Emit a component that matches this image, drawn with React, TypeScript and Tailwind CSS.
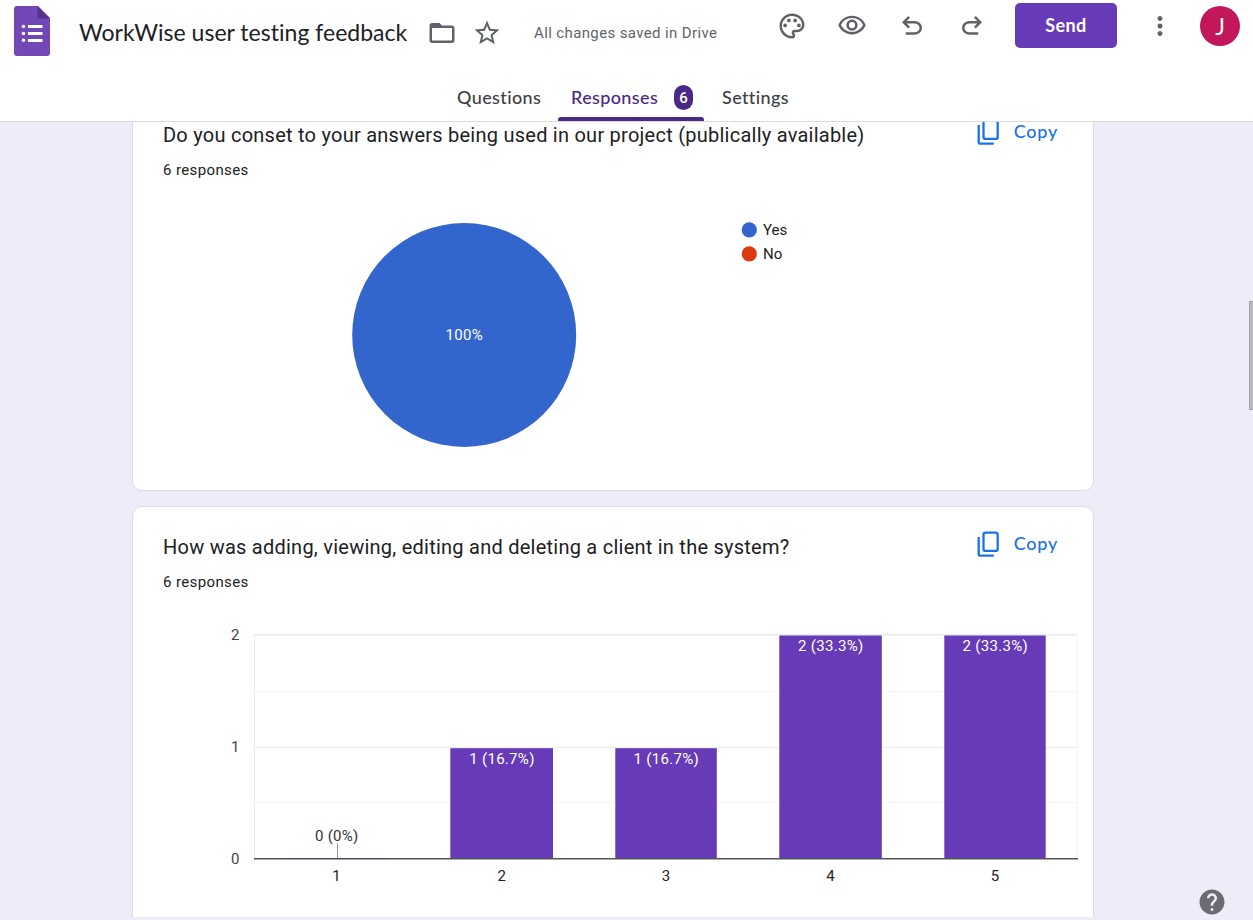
import React from "react";
import { MdOutlinePalette, MdOutlineRemoveRedEye, MdFolderOpen, MdStarBorder, MdMoreVert, MdHelp } from "react-icons/md";

const UNDO =
  "M280-200v-80h284q63 0 109.5-40T720-420q0-60-46.5-100T564-560H312l104 104-56 56-200-200 200-200 56 56-104 104h252q97 0 169.5 63T800-420q0 94-72.5 157T564-200H280Z";

const bars = [
  { x: 285.5, width: 102, label: "1", text: "0 (0%)", value: 0 },
  { x: 450.3, width: 102.7, label: "2", text: "1 (16.7%)", value: 1 },
  { x: 615.3, width: 101.5, label: "3", text: "1 (16.7%)", value: 1 },
  { x: 779.3, width: 102.5, label: "4", text: "2 (33.3%)", value: 2 },
  { x: 944.3, width: 101.4, label: "5", text: "2 (33.3%)", value: 2 },
];

function Logo() {
  return (
    <svg width="36" height="50" viewBox="0 0 36 50" className="ml-[14px] mt-[6px] shrink-0">
      <path d="M3 0H24L36 12V47a3 3 0 0 1-3 3H3a3 3 0 0 1-3-3V3a3 3 0 0 1 3-3Z" fill="#7248b9" />
      <path d="M23.5 0 36 12.5H25.5a2 2 0 0 1-2-2Z" fill="#54348a" />
      <g fill="#fff">
        <circle cx="9.5" cy="20.5" r="1.8" />
        <circle cx="9.5" cy="27.5" r="1.8" />
        <circle cx="9.5" cy="34.3" r="1.8" />
        <path d="M14 19h14.5v3H14zM14 26h14.5v3H14zM14 33h14.5v3H14z" />
      </g>
    </svg>
  );
}

function Arrow({ flip = false }: { flip?: boolean }) {
  return (
    <svg viewBox="0 -960 960 960" fill="currentColor" className={flip ? "size-[30px] -scale-x-100" : "size-[30px]"}>
      <path d={UNDO} />
    </svg>
  );
}

function Card({ title, children, height }: { title: string; children: React.ReactNode; height: string }) {
  return (
    <section className={`w-[962px] shrink-0 rounded-[10px] border border-[#dadce0] bg-white ${height}`}>
      <div className="flex h-[80px] justify-between pl-[30px] pr-[35px]">
        <div className="pt-[25px] text-[#202124]">
          <h2 className="text-[20px] leading-[30px] tracking-[0.245px]">{title}</h2>
          <p className="mt-[10px] text-[15px] leading-[20px] tracking-[0.375px]">6 responses</p>
        </div>
        <div className="mt-[22px] flex h-[30px] items-center text-[#1a73e8]">
          <svg width="22" height="26" viewBox="0 0 22 26" fill="none" stroke="currentColor" strokeWidth="2.3" className="mr-[15px]">
            <rect x="6.5" y="1.7" width="14.2" height="18.2" rx="2" />
            <path d="M1.7 6V22.9a1.8 1.8 0 0 0 1.8 1.8H16.8" />
          </svg>
          <button className="-mt-[2px] font-[Lato] text-[18px] font-medium leading-[18px] tracking-[0.75px]">Copy</button>
        </div>
      </div>
      {children}
    </section>
  );
}

function PieChart() {
  return (
    <svg width="960" height="300" viewBox="133 175 960 300" className="block text-[15px]">
      <circle cx="464.2" cy="335" r="112" fill="#3366cc" />
      <text x="464.3" y="340" textAnchor="middle" fill="#fff" className="tracking-[0.3px]">100%</text>
      <circle cx="749.3" cy="229.9" r="7.6" fill="#3366cc" />
      <circle cx="749.3" cy="253.9" r="7.6" fill="#dc3912" />
      <text x="763" y="235" fill="#222">Yes</text>
      <text x="763" y="259" fill="#222">No</text>
    </svg>
  );
}

function BarChart() {
  return (
    <svg width="960" height="325" viewBox="133 587 960 325" className="block text-[15px]">
      <g fill="#ebebeb">
        <path d="M254 634h824v1.6H254zM254 747h824v1H254zM254 634h1v225h-1z" />
        <path d="M254 691h824v1H254zM254 802h824v1H254zM1077 634h1v225h-1z" fill="#f5f5f5" />
      </g>
      {bars.map((b) => {
        const top = b.value === 2 ? 635.5 : 748.2;
        const mid = b.x + b.width / 2;
        return (
          <g key={b.label} textAnchor="middle">
            {b.value > 0 ? (
              <rect x={b.x} y={top} width={b.width} height={858 - top} fill="#673ab7" />
            ) : (
              <path d="M337 843h1v15h-1z" fill="#999" />
            )}
            <text x={mid + 0.3} y={b.value === 0 ? 841 : b.value === 1 ? 764 : 651} fill={b.value === 0 ? "#333" : "#fff"} className="tracking-[0.3px]">
              {b.text}
            </text>
            <text x={mid} y="881" fill="#222">{b.label}</text>
          </g>
        );
      })}
      <path d="M254 858h824v1.6H254z" fill="#555" />
      <path d="M286.5 858h102v1h-102z" fill="#4a4063" />
      <g textAnchor="end" fill="#444">
        <text x="239.5" y="640">2</text>
        <text x="239.5" y="752">1</text>
        <text x="239.5" y="864">0</text>
      </g>
    </svg>
  );
}

export default function App() {
  return (
    <div className="relative flex h-[920px] w-[1253px] flex-col overflow-hidden bg-[#f0ebf8] font-[Roboto,sans-serif]">
      <header className="relative z-10 flex h-[122px] shrink-0 flex-col border-b border-[#dadce0] bg-white">
        <div className="flex h-[75px] items-start text-[#5f6368]">
          <Logo />
          <h1 className="ml-[29px] mt-[17px] w-[337px] whitespace-nowrap font-[Lato] text-[23px] leading-[30px] tracking-[0.02px] text-[#202124]">WorkWise user testing feedback</h1>
          <MdFolderOpen className="ml-[11px] mt-[18px] size-[30px]" />
          <MdStarBorder className="ml-[15px] mt-[18px] size-[30px]" />
          <span className="ml-[32px] mt-[23px] w-[200px] whitespace-nowrap text-[15px] leading-[20px] tracking-[0.375px]">All changes saved in Drive</span>
          <MdOutlinePalette className="ml-[43px] mt-[11px] size-[30px]" />
          <MdOutlineRemoveRedEye className="ml-[30px] mt-[10px] size-[30px]" />
          <div className="ml-[30px] mt-[11px] flex gap-[30px]">
            <Arrow />
            <Arrow flip />
          </div>
          <button className="ml-[28px] mt-[3px] h-[45px] w-[102px] rounded-[5px] bg-[#673ab7] pb-[1px] font-[Lato] text-[18px] font-bold tracking-[0.4px] text-white">Send</button>
          <MdMoreVert className="ml-[28px] mt-[11px] size-[30px]" />
          <div className="ml-[25px] mt-[6px] flex size-[40px] items-center justify-center rounded-full bg-[#c2185b] font-[Lato] text-[23px] text-white">J</div>
        </div>
        <nav className="flex h-[46px] pl-[457px] font-[Lato] text-[18px] font-medium leading-[44px] tracking-[0.38px] text-[#3c4043]">
          <span className="w-[101px]">Questions</span>
          <span className="relative w-[146px] pl-[13px] text-[#4b2885]">
            Responses
            <span className="absolute left-[116px] top-[10px] flex h-[25px] w-[19px] items-center justify-center rounded-[10px] bg-[#4b2885] font-[Roboto] text-[15px] font-medium tracking-normal text-white">6</span>
            <span className="absolute bottom-0 left-0 h-[4px] w-[146px] rounded-t-[3px] bg-[#4b2885]" />
          </span>
          <span className="ml-[18px]">Settings</span>
        </nav>
      </header>
      <main className="flex h-[795px] flex-col overflow-hidden pl-[132px]">
        <div className="-mt-[28px] flex flex-col gap-[15px]">
          <Card title="Do you conset to your answers being used in our project (publically available)" height="h-[397px]">
            <PieChart />
          </Card>
          <Card title="How was adding, viewing, editing and deleting a client in the system?" height="h-[440px]">
            <BarChart />
          </Card>
        </div>
      </main>
      <div className="absolute right-0 top-[301px] h-[109px] w-[4px] border border-r-0 border-[#a5a3ac] bg-[#b9b7c1]" />
      <MdHelp className="absolute left-[1197px] top-[887px] size-[30px] text-[#6e6a74]" />
    </div>
  );
}
